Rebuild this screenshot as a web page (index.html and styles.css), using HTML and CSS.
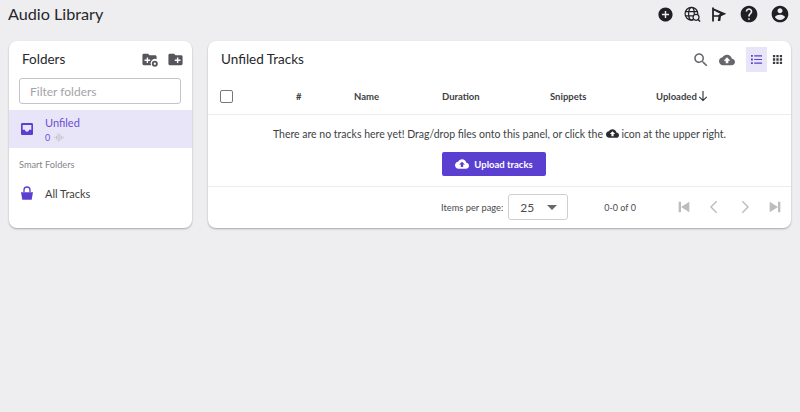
FILE: index.html
```html
<!DOCTYPE html>
<html lang="en">
<head>
    <meta charset="UTF-8">
    <meta name="viewport" content="width=device-width, initial-scale=1.0">
    <title>Audio Library</title>
    <link rel="stylesheet" href="styles.css">
</head>
<body>
    <header class="topbar">
        <h1>Audio Library</h1>
        <nav class="top-icons">
            <svg class="top-icon" viewBox="0 0 24 24"><path d="M12 2C6.48 2 2 6.48 2 12s4.48 10 10 10 10-4.48 10-10S17.52 2 12 2zm5 11h-4v4h-2v-4H7v-2h4V7h2v4h4v2z"/></svg>
            <svg class="top-icon" viewBox="0 0 24 24">
                <g fill="none" stroke="#1f2024" stroke-width="1.700">
                    <circle cx="10.500" cy="11" r="9"/>
                    <ellipse cx="10.500" cy="11" rx="4" ry="9"/>
                    <path d="M2 8h17M2 14h17"/>
                </g>
                <circle cx="17" cy="16" r="4.200" fill="#eeeef0" stroke="#1f2024" stroke-width="1.700"/>
                <path d="M19.800 19l3 3" stroke="#1f2024" stroke-width="2" fill="none"/>
            </svg>
            <svg class="top-icon" viewBox="0 0 24 24"><path fill-rule="evenodd" d="M3 2h2.500v20H3zM5.500 3.500L23 11l-7.500 3.500-1 6.500H11l1-6H5.500zM5.500 6.500V13h6l3-2z"/></svg>
            <svg class="top-icon big" viewBox="0 0 24 24"><path d="M12 2C6.48 2 2 6.48 2 12s4.48 10 10 10 10-4.48 10-10S17.52 2 12 2zm1 17h-2v-2h2v2zm2.070-7.750l-.9.920C13.450 12.900 13 13.500 13 15h-2v-.5c0-1.100.45-2.100 1.170-2.830l1.240-1.260c.37-.36.59-.86.59-1.410 0-1.100-.9-2-2-2s-2 .9-2 2H8c0-2.210 1.790-4 4-4s4 1.790 4 4c0 .88-.36 1.680-.93 2.250z"/></svg>
            <svg class="top-icon big" viewBox="0 0 24 24"><path d="M12 2C6.48 2 2 6.48 2 12s4.48 10 10 10 10-4.48 10-10S17.52 2 12 2zm0 3c1.660 0 3 1.340 3 3s-1.340 3-3 3-3-1.340-3-3 1.340-3 3-3zm0 14.200c-2.500 0-4.710-1.280-6-3.220.03-1.990 4-3.080 6-3.080 1.990 0 5.970 1.090 6 3.080-1.290 1.940-3.500 3.220-6 3.220z"/></svg>
        </nav>
    </header>

    <main class="layout">
        <section class="panel folders">
            <div class="folders-head">
                <h2>Folders</h2>
                <div class="folder-actions">
                    <svg class="gray-icon" viewBox="0 0 24 24"><path d="M20 6h-8l-2-2H4c-1.110 0-1.990.89-1.990 2L2 18c0 1.110.89 2 2 2h10.500a6 6 0 0 1 7.500-8.500V8c0-1.110-.89-2-2-2zm-7 8h-3v3H8v-3H5v-2h3V9h2v3h3v2z"/><circle cx="19.500" cy="18" r="4.200"/><circle cx="19.500" cy="18" r="1.600" fill="#fff"/></svg>
                    <svg class="gray-icon" viewBox="0 0 24 24"><path d="M20 6h-8l-2-2H4c-1.110 0-1.990.89-1.990 2L2 18c0 1.110.89 2 2 2h16c1.110 0 2-.89 2-2V8c0-1.110-.89-2-2-2zm-1 8h-3v3h-2v-3h-3v-2h3V9h2v3h3v2z"/></svg>
                </div>
            </div>
            <div class="filter-wrap">
                <input class="filter" type="text" placeholder="Filter folders">
            </div>
            <div class="folder-item active">
                <svg class="folder-icon" viewBox="0 0 24 24"><path fill-rule="evenodd" d="M5 3h14c1.100 0 2 .9 2 2v14c0 1.100-.9 2-2 2H5c-1.100 0-2-.9-2-2V5c0-1.100.9-2 2-2zM5.500 6v7H9c0 1.700 1.300 3 3 3s3-1.300 3-3h3.500V6z"/></svg>
                <div>
                    <div class="folder-name">Unfiled</div>
                    <div class="folder-count">0
                        <svg class="wave" viewBox="0 0 12 10"><path d="M1 4v2M3 3v4M5 0v10M7 1v8M9 3v4M11 4v2"/></svg>
                    </div>
                </div>
            </div>
            <div class="smart-label">Smart Folders</div>
            <div class="folder-item smart">
                <svg class="folder-icon" viewBox="0 0 24 24"><path d="M3 11h18l-2 11H5z"/><path d="M7.500 11V7.500a4.500 4.500 0 0 1 9 0V11" fill="none" stroke="#5b3fd1" stroke-width="2"/></svg>
                <div class="smart-name">All Tracks</div>
            </div>
        </section>

        <section class="panel tracks">
            <div class="tracks-head">
                <h2>Unfiled Tracks</h2>
                <div class="tracks-tools">
                    <svg class="tool-icon" viewBox="0 0 24 24"><path d="M15.500 14h-.79l-.28-.27C15.410 12.590 16 11.110 16 9.500 16 5.910 13.090 3 9.500 3S3 5.910 3 9.500 5.910 16 9.500 16c1.610 0 3.090-.59 4.230-1.570l.27.28v.79l5 4.990L20.490 19l-4.990-5zm-6 0C7.010 14 5 11.990 5 9.500S7.010 5 9.500 5 14 7.010 14 9.500 11.990 14 9.500 14z"/></svg>
                    <svg class="tool-icon cloud" viewBox="0 0 24 24"><path d="M19.350 10.040C18.670 6.590 15.640 4 12 4 9.110 4 6.600 5.640 5.350 8.040 2.340 8.360 0 10.910 0 14c0 3.310 2.690 6 6 6h13c2.760 0 5-2.240 5-5 0-2.640-2.050-4.780-4.650-4.960zM14 13v4h-4v-4H7l5-5 5 5h-3z"/></svg>
                    <div class="view-toggle">
                        <div class="view-btn on">
                            <svg viewBox="0 0 12 12"><path d="M0 1h2v2H0zM3.500 1.400H12v1.200H3.500zM0 5h2v2H0zM3.500 5.400H12v1.200H3.500zM0 9h2v2H0zM3.500 9.400H12v1.200H3.500z"/></svg>
                        </div>
                        <div class="view-btn">
                            <svg viewBox="0 0 12 12"><path d="M1 1h2.500v2.500H1zM4.750 1h2.500v2.500h-2.500zM8.500 1H11v2.500H8.500zM1 4.750h2.500v2.500H1zM4.750 4.750h2.500v2.500h-2.500zM8.500 4.750H11v2.500H8.500zM1 8.500h2.500V11H1zM4.750 8.500h2.500V11h-2.500zM8.500 8.500H11V11H8.500z"/></svg>
                        </div>
                    </div>
                </div>
            </div>

            <div class="table-head">
                <span class="checkbox"></span>
                <span>#</span>
                <span>Name</span>
                <span>Duration</span>
                <span>Snippets</span>
                <span class="sorted">Uploaded
                    <svg viewBox="0 0 12 14"><path d="M6 1v11M1.500 8L6 12.500 10.500 8" fill="none" stroke="#2b2c30" stroke-width="1.300"/></svg>
                </span>
            </div>

            <div class="empty">
                <p>There are no tracks here yet! Drag/drop files onto this panel, or click the
                    <svg class="inline-cloud" viewBox="0 0 24 24"><path d="M19.350 10.040C18.670 6.590 15.640 4 12 4 9.110 4 6.600 5.640 5.350 8.040 2.340 8.360 0 10.910 0 14c0 3.310 2.690 6 6 6h13c2.760 0 5-2.240 5-5 0-2.640-2.050-4.780-4.650-4.960zM14 13v4h-4v-4H7l5-5 5 5h-3z"/></svg>
                    icon at the upper right.</p>
                <button class="upload-btn">
                    <svg viewBox="0 0 24 24"><path d="M19.350 10.040C18.670 6.590 15.640 4 12 4 9.110 4 6.600 5.640 5.350 8.040 2.340 8.360 0 10.910 0 14c0 3.310 2.690 6 6 6h13c2.760 0 5-2.240 5-5 0-2.640-2.050-4.780-4.650-4.960zM14 13v4h-4v-4H7l5-5 5 5h-3z"/></svg>
                    Upload tracks
                </button>
            </div>

            <div class="pager">
                <span class="per-page">Items per page:</span>
                <div class="page-select">
                    <span>25</span>
                    <i class="caret"></i>
                </div>
                <span class="range">0-0 of 0</span>
                <div class="page-btns">
                    <svg viewBox="0 0 24 24"><path d="M4 4h3.500v16H4zm3.500 8L20 20V4z"/></svg>
                    <svg class="thin" viewBox="0 0 24 24"><path d="M16 3.500L7.500 12l8.500 8.500"/></svg>
                    <svg class="thin" viewBox="0 0 24 24"><path d="M8 3.500l8.500 8.500L8 20.500"/></svg>
                    <svg viewBox="0 0 24 24"><path d="M4 20l12.500-8L4 4zM16.500 4v16H20V4z"/></svg>
                </div>
            </div>
        </section>
    </main>
</body>
</html>
```

FILE: styles.css
```css
* {
    box-sizing: border-box;
    margin: 0;
    padding: 0;
}

body {
    font-family: 'Lato', 'Liberation Sans', sans-serif;
    background: #eeeef0;
    color: #2b2c30;
    height: 412px;
    overflow: hidden;
}

h1 {
    font-size: 16.200px;
    font-weight: 400;
    line-height: 28px;
    color: #26272b;
}

h2 {
    margin-top: -2px;
    font-size: 13.500px;
    font-weight: 400;
    color: #26272b;
}

.topbar {
    display: flex;
    justify-content: space-between;
    align-items: center;
    height: 28px;
    padding: 0 10px 0 8px;
}

.top-icons {
    display: flex;
    align-items: center;
    gap: 9.500px;
}

.top-icon {
    width: 17px;
    height: 17px;
    fill: #1f2024;
}

.top-icon.big {
    width: 20px;
    height: 20px;
    margin-left: 2px;
}

.layout {
    display: grid;
    grid-template-columns: 183px 583px;
    gap: 16px;
    margin: 13px 0 0 9px;
}

.panel {
    height: 187px;
    background: #fff;
    border-radius: 8px;
    box-shadow: 0 1px 2px rgba(0, 0, 0, 0.3);
    overflow: hidden;
}

.folders-head {
    display: flex;
    justify-content: space-between;
    align-items: center;
    height: 37px;
    padding: 0 8px 0 13px;
}

.folder-actions {
    display: flex;
    gap: 9px;
}

.gray-icon {
    width: 17px;
    height: 17px;
    fill: #55565c;
}

.filter-wrap {
    padding: 0 11px 6px 10px;
}

.filter {
    display: block;
    width: 100%;
    height: 26px;
    padding: 0 10px;
    border: 1px solid #c4c4c8;
    border-radius: 3px;
    font-family: inherit;
    font-size: 12px;
}

.filter::placeholder {
    color: #a3a3a8;
}

.folder-item {
    display: flex;
    align-items: center;
    gap: 10px;
    padding-left: 10px;
}

.folder-item.active {
    height: 38px;
    background: #e8e5f8;
}

.folder-icon {
    width: 16px;
    height: 16px;
    fill: #5b3fd1;
}

.folder-name {
    font-size: 11px;
    line-height: 16px;
    color: #6a50d6;
}

.folder-count {
    display: flex;
    align-items: center;
    gap: 4px;
    font-size: 9px;
    line-height: 12px;
    margin-top: 1px;
    color: #6a50d6;
}

.wave {
    width: 10px;
    height: 9px;
    fill: none;
    stroke: #bdbdc2;
    stroke-width: 1;
}

.smart-label {
    padding: 11px 0 0 10px;
    font-size: 9.200px;
    line-height: 12px;
    color: #85858b;
}

.folder-item.smart {
    height: 46px;
    margin-top: -1px;
}

.smart-name {
    font-size: 11px;
    color: #3e3f44;
}

.tracks-head {
    display: flex;
    justify-content: space-between;
    align-items: center;
    height: 37px;
    padding: 0 3px 0 13px;
}

.tracks-tools {
    display: flex;
    align-items: center;
    gap: 9px;
}

.tool-icon {
    width: 18px;
    height: 18px;
    fill: #66676c;
}

.tool-icon.cloud {
    width: 16px;
    height: 16px;
}

.view-toggle {
    display: flex;
    margin-left: 2px;
}

.view-btn {
    display: flex;
    align-items: center;
    justify-content: center;
    width: 21px;
    height: 25px;
}

.view-btn svg {
    width: 11px;
    height: 11px;
    fill: #3a3b40;
}

.view-btn.on {
    background: #e8e5f8;
}

.view-btn.on svg {
    fill: #5b3fd1;
}

.table-head {
    display: grid;
    grid-template-columns: 76px 58px 88px 108px 106px 1fr;
    align-items: center;
    height: 37px;
    padding-left: 12px;
    border-bottom: 1px solid #ececee;
    font-size: 9.500px;
    font-weight: 700;
    color: #3e3f44;
}

.checkbox {
    width: 13px;
    height: 13px;
    border: 1.500px solid #77787d;
    border-radius: 2px;
}

.sorted {
    display: flex;
    align-items: center;
    gap: 1px;
}

.sorted svg {
    width: 10px;
    height: 12px;
}

.empty {
    display: flex;
    flex-direction: column;
    align-items: center;
    height: 72px;
    padding-top: 11px;
    border-bottom: 1px solid #ececee;
}

.empty p {
    font-size: 10.500px;
    line-height: 16px;
    color: #3e3f44;
}

.inline-cloud {
    width: 13px;
    height: 13px;
    fill: #2b2c30;
    vertical-align: -2px;
}

.upload-btn {
    display: flex;
    align-items: center;
    justify-content: center;
    gap: 5px;
    width: 104px;
    height: 24px;
    margin: 10px 11px 0 0;
    border: none;
    border-radius: 2px;
    background: #5b3fd1;
    color: #fff;
    font-family: inherit;
    font-size: 9.500px;
    font-weight: 700;
}

.upload-btn svg {
    width: 14px;
    height: 14px;
    fill: #fff;
}

.pager {
    display: flex;
    align-items: center;
    height: 40px;
    padding-left: 233px;
    font-size: 9.300px;
    color: #4a4b50;
}

.page-select {
    display: flex;
    justify-content: space-between;
    align-items: center;
    width: 60px;
    height: 26px;
    margin-left: 5px;
    padding: 0 10px 0 11px;
    border: 1px solid #cfcfd3;
    border-radius: 3px;
    font-size: 12px;
}

.caret {
    border-top: 5px solid #66676c;
    border-left: 5px solid transparent;
    border-right: 5px solid transparent;
}

.range {
    margin-left: 36px;
    font-size: 9px;
}

.page-btns {
    display: flex;
    gap: 14.500px;
    margin-left: 40px;
}

.page-btns svg {
    width: 16px;
    height: 16px;
    fill: #bdbdc1;
}

.page-btns svg.thin {
    fill: none;
    stroke: #bdbdc1;
    stroke-width: 2.200;
}
```
